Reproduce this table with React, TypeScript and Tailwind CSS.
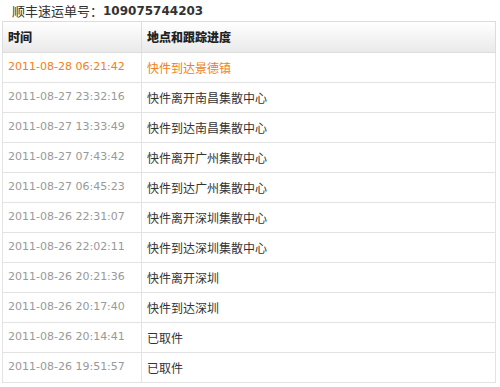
const ROWS: [string, string][] = [
  ['2011-08-28 06:21:42', '快件到达景德镇'],
  ['2011-08-27 23:32:16', '快件离开南昌集散中心'],
  ['2011-08-27 13:33:49', '快件到达南昌集散中心'],
  ['2011-08-27 07:43:42', '快件离开广州集散中心'],
  ['2011-08-27 06:45:23', '快件到达广州集散中心'],
  ['2011-08-26 22:31:07', '快件离开深圳集散中心'],
  ['2011-08-26 22:02:11', '快件到达深圳集散中心'],
  ['2011-08-26 20:21:36', '快件离开深圳'],
  ['2011-08-26 20:17:40', '快件到达深圳'],
  ['2011-08-26 20:14:41', '已取件'],
  ['2011-08-26 19:51:57', '已取件'],
];

const latin = "font-['DejaVu_Sans','Noto_Sans_CJK_SC',sans-serif]";
const cjk = "font-['Noto_Sans_CJK_SC',sans-serif]";

export default function App() {
  return (
    <div className="w-[500px] h-[387px] overflow-hidden bg-white pt-[1px]">
      <div className="h-[20px] pl-[12px] flex items-center text-[13px] text-[#333]">
        <span className={cjk}>顺丰速运单号：</span>
        <span className={`${latin} font-bold text-[12px]`}>109075744203</span>
      </div>
      <table className="ml-[2px] w-[494px] border-collapse border border-[#ddd] table-fixed">
        <colgroup>
          <col className="w-[139px]" />
          <col />
        </colgroup>
        <thead>
          <tr className="h-[31px] bg-gradient-to-b from-white to-[#e9e9e9]">
            <th className={`${cjk} text-left pl-[5px] text-[12px] font-black text-[#222] border border-[#ddd]`}>时间</th>
            <th className={`${cjk} text-left pl-[5px] text-[12px] font-black text-[#222] border border-[#ddd]`}>地点和跟踪进度</th>
          </tr>
        </thead>
        <tbody>
          {ROWS.map(([time, place], i) => (
            <tr key={i} className="h-[30px]">
              <td className={`${latin} pl-[5px] text-[11px] border border-[#e3e3e3] ${i === 0 ? 'text-[#f08020]' : 'text-[#999]'}`}>
                {time}
              </td>
              <td className={`${cjk} pl-[5px] text-[12px] border border-[#e3e3e3] ${i === 0 ? 'text-[#f08020]' : 'text-[#333]'}`}>
                {place}
              </td>
            </tr>
          ))}
        </tbody>
      </table>
    </div>
  );
}
